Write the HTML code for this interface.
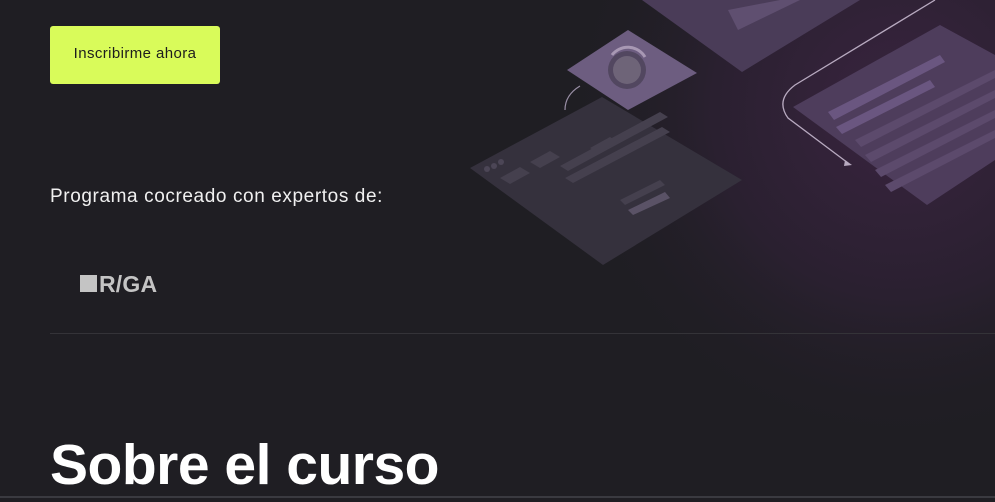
<!DOCTYPE html>
<html><head><meta charset="utf-8"><style>
body{margin:0;width:995px;height:502px;overflow:hidden;background:#1f1e23;font-family:"Liberation Sans",sans-serif;position:relative;color:#fff}
.btn{position:absolute;left:50px;top:26px;width:170px;height:58px;background:#d9fb5a;border-radius:3px;color:#1d1d1d;font-size:15px;letter-spacing:0.4px;line-height:56px;text-align:center}
.p{position:absolute;left:50px;top:186px;font-size:19px;letter-spacing:0.6px;color:#f0f0f0}
.logo{position:absolute;left:80px;top:271px;font-size:23px;font-weight:bold;color:#c4c4c4;letter-spacing:0.2px}
.logo span{display:inline-block;width:17px;height:17px;background:#c4c4c4;margin-right:2px;vertical-align:0}
.hr{position:absolute;left:50px;right:0;top:333px;height:1px;background:#343338}
h1{position:absolute;left:50px;top:432px;margin:0;font-size:57px;font-weight:bold;letter-spacing:-0.5px;color:#fff}
.bot{position:absolute;left:0;right:0;top:496px;height:2px;background:#3a3a40}
svg{position:absolute;left:0;top:0}
</style></head><body>
<svg width="995" height="502">
<defs>
<radialGradient id="g" cx="900" cy="110" r="340" gradientUnits="userSpaceOnUse">
<stop offset="0" stop-color="#39243f"/><stop offset="0.55" stop-color="#2a2030"/><stop offset="1" stop-color="#1f1e23" stop-opacity="0"/></radialGradient>
</defs>
<rect x="0" y="0" width="995" height="502" fill="url(#g)"/>
<polygon points="642,0 860,0 742,72" fill="#4a3c58"/>
<polygon points="728,10 780,0 800,0 738,30" fill="#5f4f70"/>
<polygon points="793,107 940,25 995,55 995,160 927,205" fill="#4e3d5c"/>
<polygon points="828,112 940,55 945,62 834,120" fill="#6a5680"/>
<polygon points="836,127 930,80 935,87 842,134" fill="#6a5680"/>
<g fill="#5c4a6c"><polygon points="855,140 995,70 995,78 861,147"/><polygon points="865,155 995,90 995,98 871,162"/><polygon points="875,170 995,110 995,118 881,177"/><polygon points="885,185 995,130 995,138 891,192"/></g>
<path d="M935,0 L795,85 Q775,100 788,118 L848,163" stroke="#b8aac0" stroke-width="1.3" fill="none"/>
<polygon points="845,160 852,165 844,166" fill="#b8aac0"/>
<polygon points="470,168 602,97 742,180 603,265" fill="#35313d"/>
<g fill="#45404e"><polygon points="560,166 660,112 668,117 568,171"/><polygon points="565,178 662,127 670,132 573,183"/><polygon points="500,178 520,167 530,173 510,184"/><polygon points="530,162 550,151 560,157 540,168"/><polygon points="590,148 610,137 618,142 598,153"/><polygon points="620,200 660,180 665,185 625,205"/></g>
<polygon points="628,210 665,192 670,198 633,215" fill="#5a5266"/>
<circle cx="487" cy="169" r="3" fill="#4c4656"/><circle cx="494" cy="166" r="3" fill="#4c4656"/><circle cx="501" cy="162" r="3" fill="#4c4656"/>
<path d="M580,86 Q565,95 565,110" stroke="#9a8fa6" stroke-width="1.2" fill="none"/>
<polygon points="567,70 628,30 697,73 628,110" fill="#6d5d80"/>
<circle cx="627" cy="70" r="19" fill="#524760"/><circle cx="627" cy="70" r="14" fill="#6e6478"/>
<path d="M612,55 A20,20 0 0,1 645,57" stroke="#a898b4" stroke-width="3" fill="none"/>
</svg>
<div class="btn">Inscribirme ahora</div>
<div class="p">Programa cocreado con expertos de:</div>
<div class="logo"><span></span>R/GA</div>
<div class="hr"></div>
<h1>Sobre el curso</h1>
<div class="bot"></div>
</body></html>
